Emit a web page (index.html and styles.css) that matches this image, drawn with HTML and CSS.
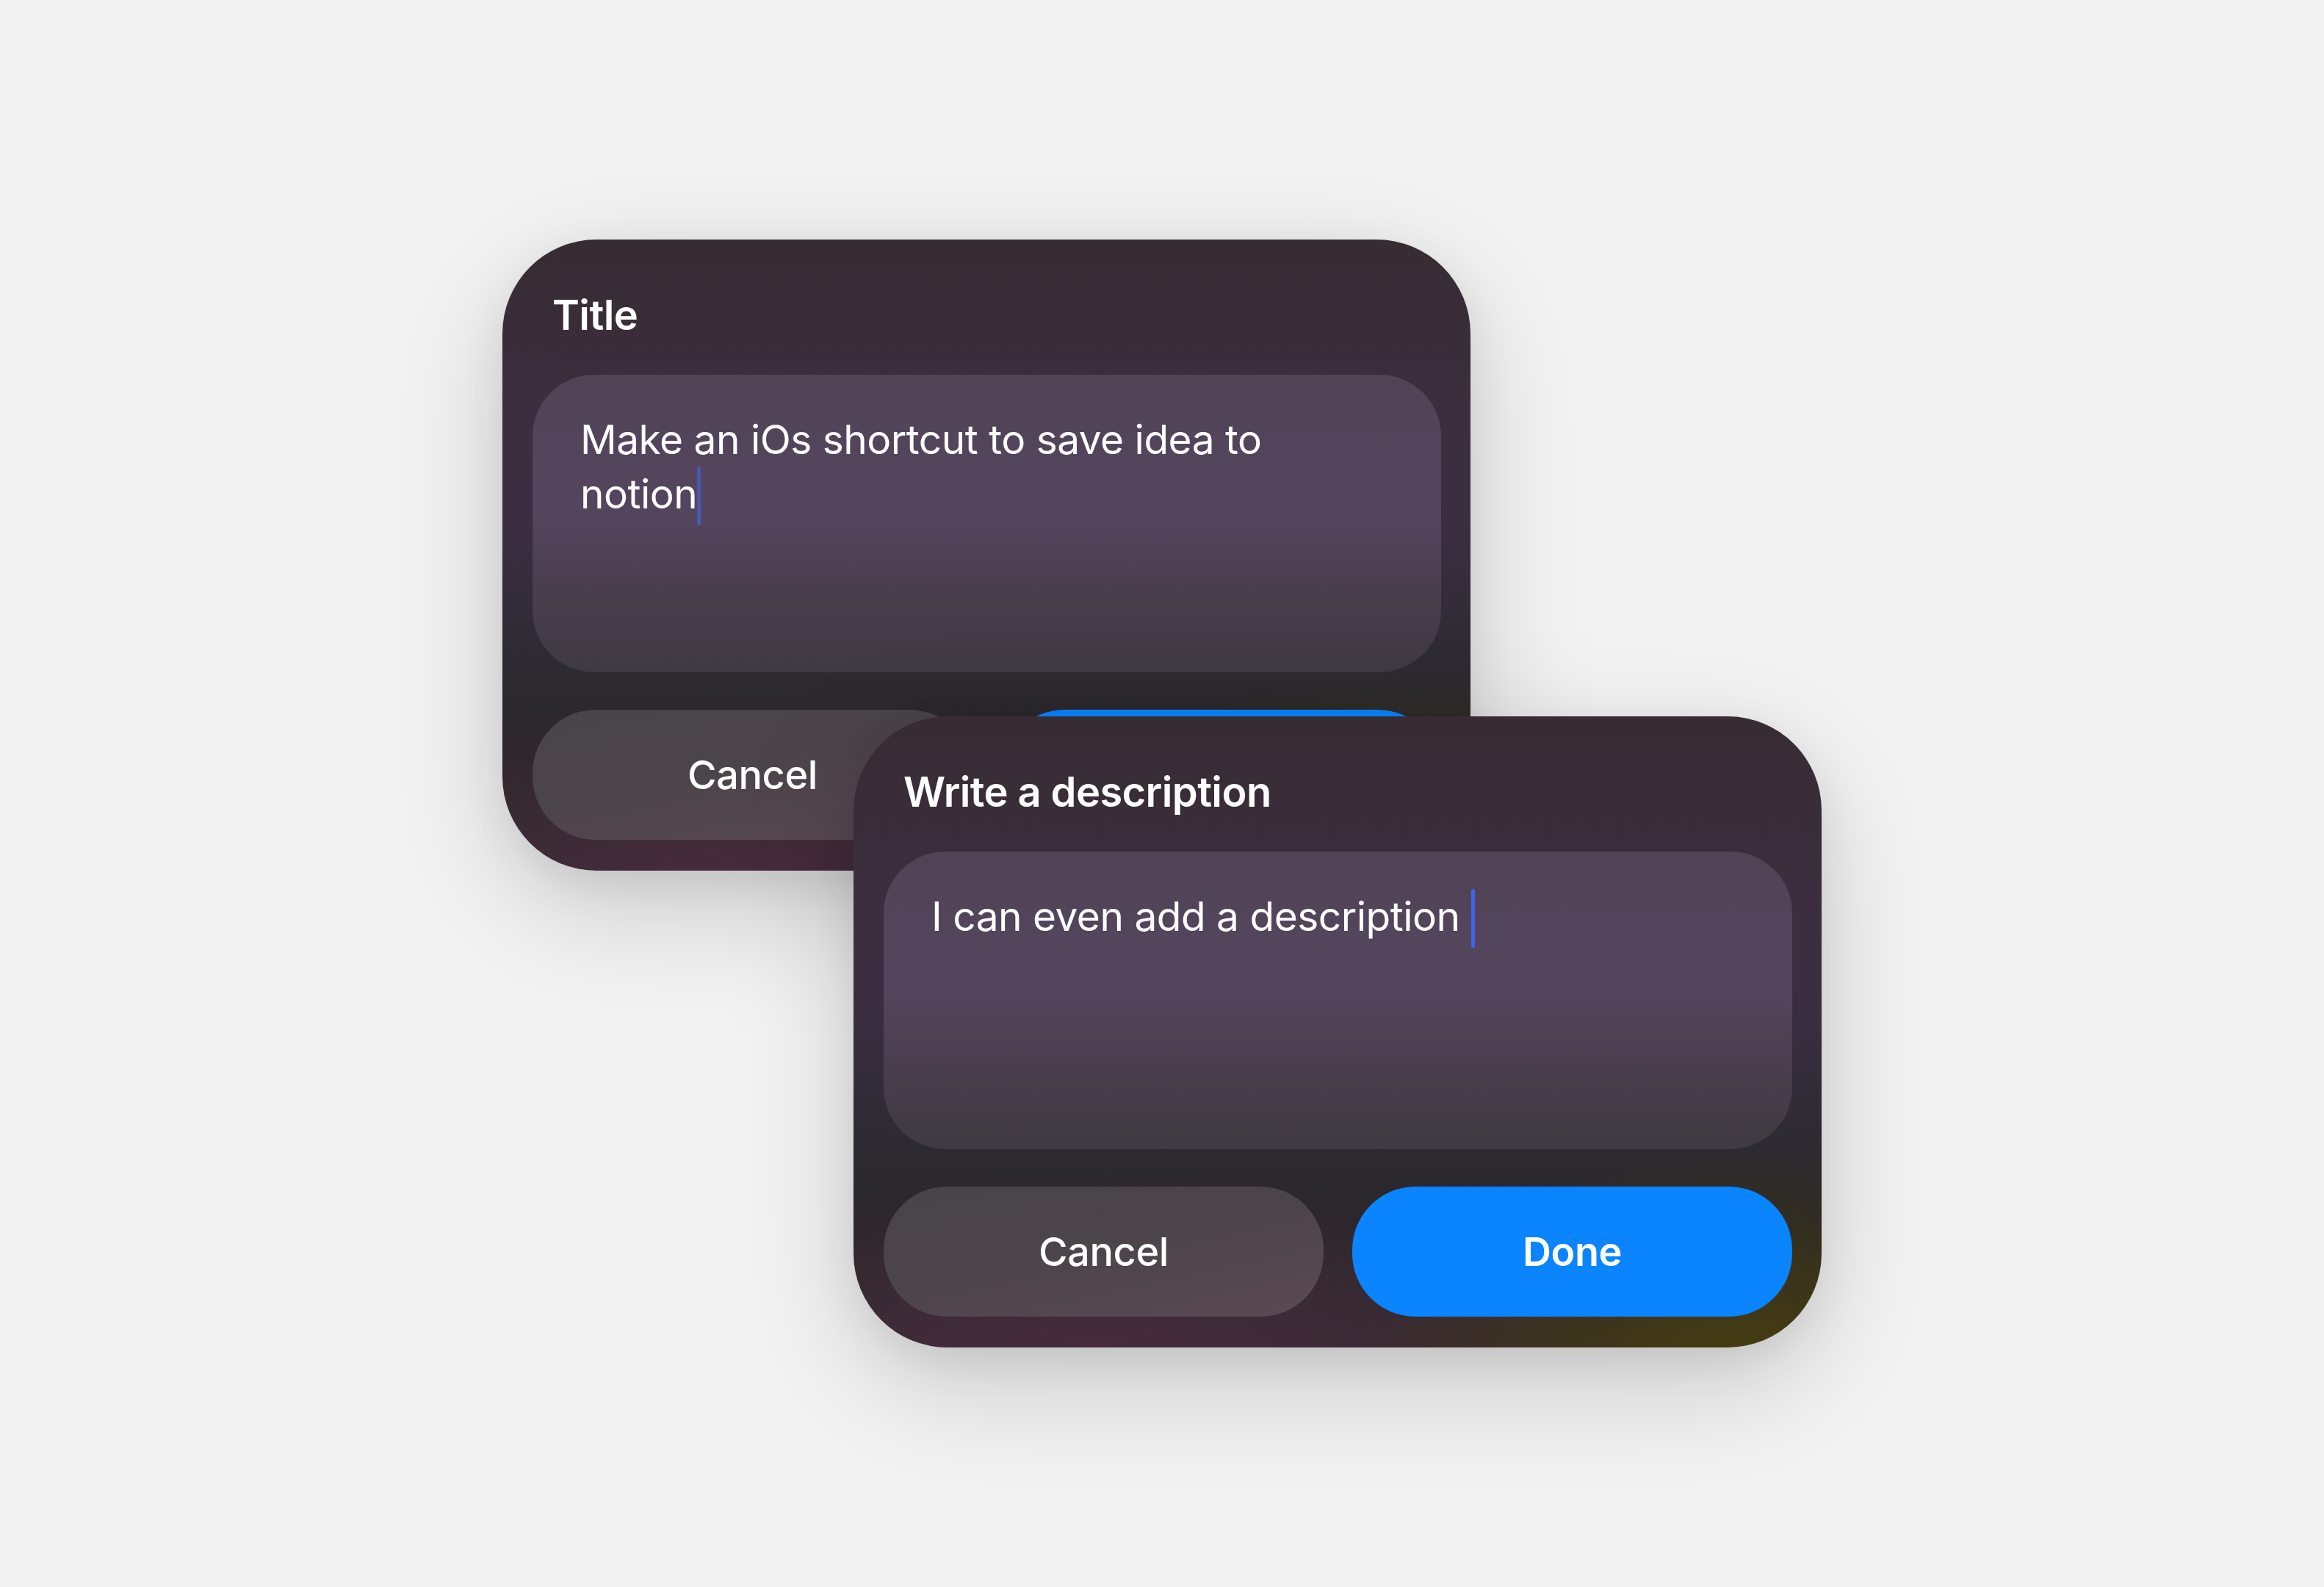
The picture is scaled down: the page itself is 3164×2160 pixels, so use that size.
FILE: index.html
```html
<!DOCTYPE html>
<html lang="en">
<head>
<meta charset="utf-8">
<title>Dialogs</title>
<link rel="stylesheet" href="styles.css">
</head>
<body>
  <main class="stage">
    <div class="stack">
      <section class="card card-back">
        <h2 class="card-title">Title</h2>
        <div class="field">
          <p class="field-text">Make an iOs shortcut to save idea to<br>notion<span class="caret caret-dim"></span></p>
        </div>
        <div class="actions">
          <button class="btn btn-cancel">Cancel</button>
          <button class="btn btn-done">Done</button>
        </div>
      </section>
      <section class="card card-front">
        <h2 class="card-title">Write a description</h2>
        <div class="field">
          <p class="field-text">I can even add a description <span class="caret"></span></p>
        </div>
        <div class="actions">
          <button class="btn btn-cancel">Cancel</button>
          <button class="btn btn-done">Done</button>
        </div>
      </section>
    </div>
  </main>
</body>
</html>
```

FILE: styles.css
```css
* { box-sizing: border-box; }

html, body {
  margin: 0;
  padding: 0;
}

body {
  width: 3164px;
  height: 2160px;
  background: #f3f3f3;
  font-family: "Inter", "Noto Sans", "Liberation Sans", sans-serif;
  color: #ffffff;
  overflow: hidden;
}

.stage {
  padding: 326px 0 0 684px;
}

.stack {
  display: grid;
  grid-template-columns: max-content;
}

.card {
  grid-area: 1 / 1;
  width: 1318px;
  height: 859px;
  border-radius: 128px;
  padding: 69px 40px 42px 41px;
  display: flex;
  flex-direction: column;
  background:
    radial-gradient(ellipse 520px 300px at 92% 104%, rgba(72, 62, 12, 0.95), rgba(72, 62, 12, 0) 100%),
    radial-gradient(ellipse 700px 260px at 25% 102%, rgba(74, 44, 62, 0.9), rgba(74, 44, 62, 0) 100%),
    linear-gradient(180deg, #372c33 0%, #3c2e3f 30%, #392e40 48%, #2d2a31 68%, #29262a 80%, #312a2f 100%);
  box-shadow: 0 50px 170px rgba(0, 0, 0, 0.17), 0 20px 60px rgba(0, 0, 0, 0.08);
}

.card-front {
  margin: 649px 0 0 478px;
}

.card-title {
  margin: 0 0 47px 27px;
  font-size: 56px;
  line-height: 68px;
  font-weight: 600;
  letter-spacing: -0.6px;
  color: #ffffff;
}

.field {
  height: 405px;
  border-radius: 84px;
  padding: 51px 66px 0 65px;
  background:
    linear-gradient(180deg, #4f4355 0%, #53455c 30%, #54455e 45%, #4b3f50 68%, #3f3a41 100%);
}

.field-text {
  margin: 0;
  font-size: 55px;
  line-height: 74px;
  font-weight: 400;
  letter-spacing: -0.5px;
  color: #ffffff;
}

.caret {
  display: inline-block;
  width: 5px;
  height: 80px;
  margin-left: 1px;
  vertical-align: -23px;
  border-radius: 3px;
  background: #3e64ee;
}

.caret-dim {
  margin-left: 0;
  background: #4a58b4;
}

.actions {
  margin-top: 51px;
  display: grid;
  grid-template-columns: 1fr 1fr;
  gap: 39px;
}

.btn {
  height: 177px;
  border: none;
  border-radius: 86px;
  font-family: "Inter", "Noto Sans", "Liberation Sans", sans-serif;
  font-size: 54px;
  letter-spacing: -0.4px;
  color: #ffffff;
  display: flex;
  align-items: center;
  justify-content: center;
  padding: 0;
}

.btn-cancel {
  font-weight: 500;
  background: linear-gradient(168deg, #48444a 0%, #4c444b 45%, #5b4953 100%);
}

.btn-done {
  font-weight: 600;
  background: #0a84ff;
}
```
